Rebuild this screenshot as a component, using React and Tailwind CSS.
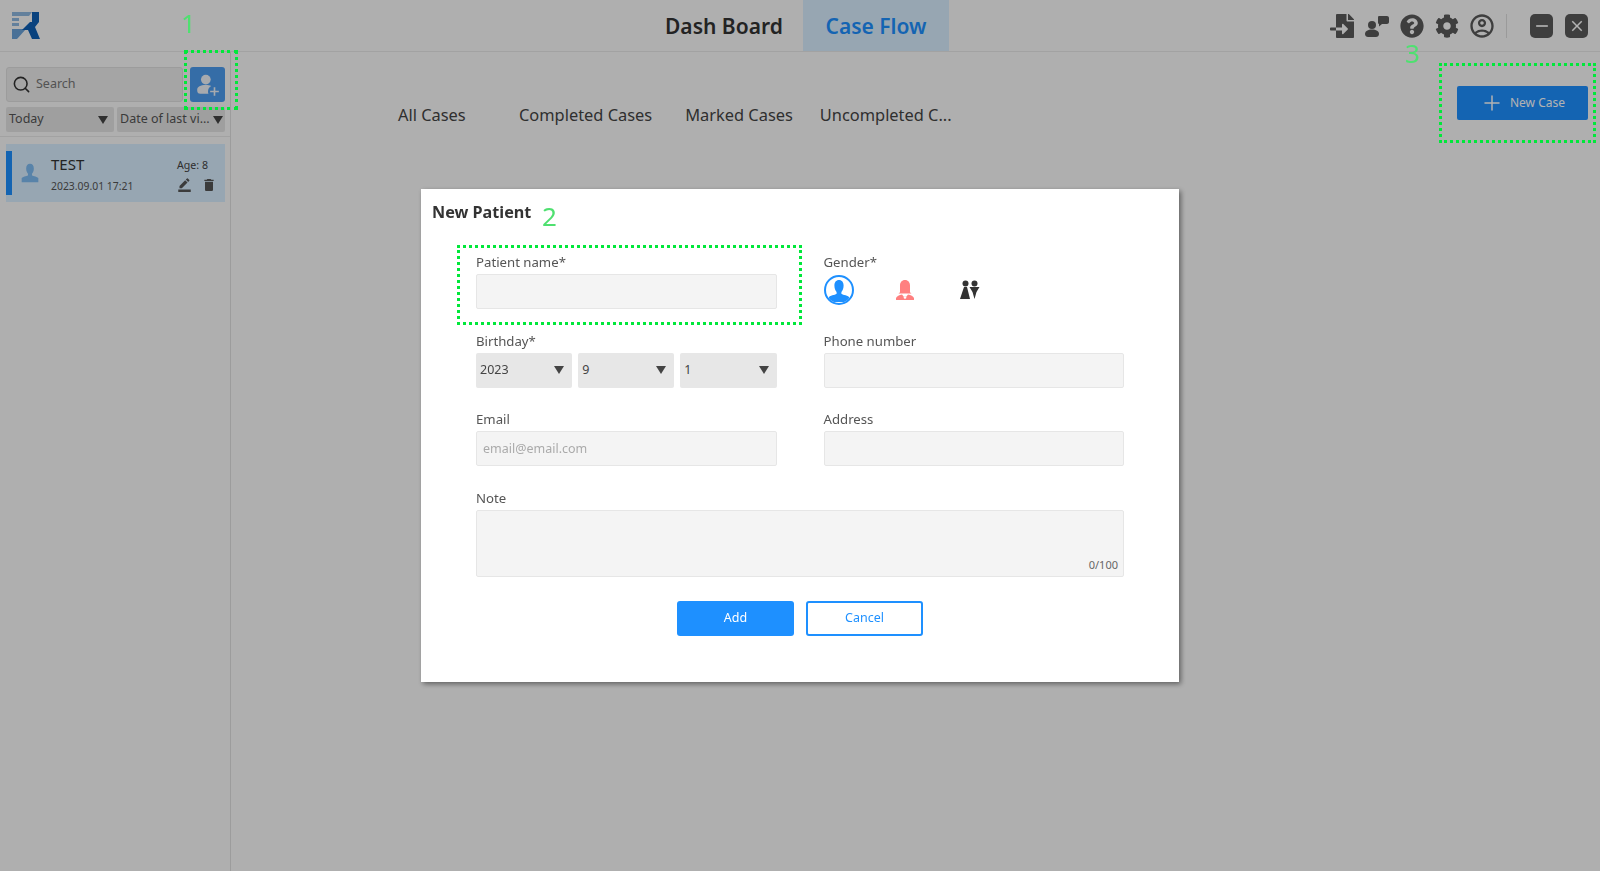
import React from 'react';
import { Search, Plus } from 'lucide-react';
import { FaFileImport, FaQuestionCircle, FaCog } from 'react-icons/fa';
import { MdBorderColor, MdDelete, MdOutlineAccountCircle, MdRemove, MdClose } from 'react-icons/md';

const font = { fontFamily: '"Noto Sans", "Open Sans", sans-serif' };

function Caret({ className = '' }) {
  return (
    <svg viewBox="0 0 10 8" className={`w-[10px] h-[8px] shrink-0 ${className}`}>
      <path d="M0 0h10L5 8z" fill="#444" />
    </svg>
  );
}

function Logo() {
  return (
    <svg viewBox="0 0 30 30" className="w-[30px] h-[30px]">
      <path d="M1 1h20l-3 4H1z" fill="#8fb8e0" />
      <path d="M1 7h7v3H1zM1 12h7v3H1z" fill="#8fb8e0" />
      <path d="M1 18h14l-9 10H1z" fill="#6aa2d8" />
      <path d="M21 1h7v10l-4 5 5 12h-8l-4-9h-6l8-8h2z" fill="#0d5fb5" />
    </svg>
  );
}

function PatientIcon({ className, color }) {
  return (
    <svg viewBox="0 0 24 24" className={className}>
      <path d="M12 1c3 0 4.600 2.400 4.600 5.600 0 2.800-.9 5-2.200 6.400v1.800c0 .8 5.400 1.400 7.600 3.200V23H2v-5c2.200-1.800 7.600-2.400 7.600-3.200V13C8.300 11.600 7.400 9.400 7.400 6.600 7.400 3.400 9 1 12 1z" fill={color} />
    </svg>
  );
}

function FemaleIcon() {
  return (
    <svg viewBox="0 0 20 20" className="w-[20px] h-[20px]">
      <path d="M10 0c3.200 0 5 2.400 5 5.500v6c0 1 .6 1.500 1.500 2H3.500c.9-.5 1.500-1 1.500-2v-6C5 2.400 6.800 0 10 0z" fill="#ff8080" />
      <path d="M7 14.500 9 17l1-1 1 1 2-2.500c3 .5 5 1.800 6 3.500v2H1v-2c1-1.700 3-3 6-3.500z" fill="#ff8080" />
      <circle cx="10" cy="17.500" r="1.300" fill="#fff" />
    </svg>
  );
}

function AddUserIcon() {
  return (
    <svg viewBox="0 0 24 24" className="w-[26px] h-[26px]">
      <circle cx="10" cy="7" r="4.500" fill="#f0f4f9" />
      <path d="M2 16.500c0-3 3-4.500 8-4.500 2 0 3.500.3 5 1-2 1-3 2.700-3 5 0 .8.100 1.400.4 2H5c-2 0-3-1-3-3.500z" fill="#f0f4f9" />
      <path d="M18 14v8M14 18h8" stroke="#f0f4f9" strokeWidth="1.500" />
    </svg>
  );
}

function ChatUserIcon() {
  return (
    <svg viewBox="0 0 24 24" className="w-[24px] h-[24px]">
      <circle cx="7" cy="11" r="4" fill="#5a5a5a" />
      <path d="M0 20c0-3 3-4.500 7-4.500s7 1.500 7 4.500c0 2-1.500 3-3 3H3c-1.500 0-3-1-3-3z" fill="#5a5a5a" />
      <path d="M14 2h8c1 0 2 .8 2 2v4c0 1-1 2-2 2h-5l-3 2.500V10c-1-.3-1-1-1-2V4c0-1.200 0-2 1-2z" fill="#5a5a5a" />
    </svg>
  );
}

function CouplesIcon() {
  return (
    <svg viewBox="0 0 20 20" className="w-[20px] h-[20px]">
      <circle cx="5.500" cy="3.500" r="3" fill="#333" />
      <path d="M4 7h3l3 12H0z" fill="#333" />
      <circle cx="14.500" cy="3.500" r="3" fill="#333" />
      <path d="M9.500 7h10l-3 5-2 7-2-7z" fill="#333" />
    </svg>
  );
}

function FieldLabel({ children }) {
  return <div className="h-[23px] text-[13.2px] leading-[22px] text-[#555]">{children}</div>;
}

function TextField({ label, placeholder }) {
  return (
    <div>
      <FieldLabel>{label}</FieldLabel>
      <input
        placeholder={placeholder}
        className="block w-full h-[35px] px-[6px] text-[12.5px] text-[#555] bg-[#f4f4f4] border border-[#e6e6e6] rounded-[2px] placeholder:text-[#aaa] outline-none"
      />
    </div>
  );
}

function DateSelect({ value }) {
  return (
    <div className="flex-1 h-[35px] flex items-center justify-between px-[4px] pr-[8px] bg-[#e7e7e7] rounded-[2px] text-[12.5px] text-[#444]">
      <span>{value}</span>
      <Caret />
    </div>
  );
}

function FilterSelect({ value, className }) {
  return (
    <div className={`h-[25px] flex items-center justify-between pl-[3px] bg-[#e4e4e4] rounded-[2px] text-[12.5px] text-[#555] ${className}`}>
      <span className="whitespace-nowrap">{value}</span>
      <Caret />
    </div>
  );
}

function NewPatientModal() {
  return (
    <div className="fixed inset-0 z-10 bg-black/30 flex items-center justify-center">
      <div className="relative w-[758px] h-[493px] bg-white shadow-[2px_2px_5px_rgba(0,0,0,0.45)]">
        <h2 className="pl-[11px] pt-[10px] h-[62px] text-[16.2px] leading-[26px] font-bold text-[#333]">New Patient</h2>
        <div className="px-[55px] grid grid-cols-2 gap-x-[47px] gap-y-[20.7px]">
          <TextField label="Patient name*" />
          <div>
            <FieldLabel>Gender*</FieldLabel>
            <div className="flex items-center h-[31px]">
              <div className="w-[30px] h-[30px] rounded-full border-2 border-[#1e90ff] overflow-hidden flex items-end justify-center">
                <PatientIcon className="w-[24px] h-[24px]" color="#1e90ff" />
              </div>
              <div className="ml-[36px] w-[30px] flex justify-center">
                <FemaleIcon />
              </div>
              <div className="ml-[35px] w-[30px] flex justify-center">
                <CouplesIcon />
              </div>
            </div>
          </div>
          <div>
            <FieldLabel>Birthday*</FieldLabel>
            <div className="flex gap-[6px]">
              <DateSelect value="2023" />
              <DateSelect value="9" />
              <DateSelect value="1" />
            </div>
          </div>
          <TextField label="Phone number" />
          <TextField label="Email" placeholder="email@email.com" />
          <TextField label="Address" />
          <div className="col-span-2">
            <FieldLabel>Note</FieldLabel>
            <div className="relative h-[67px] bg-[#f4f4f4] border border-[#e6e6e6] rounded-[2px]">
              <span className="absolute right-[5px] bottom-[3px] text-[11px] text-[#666]">0/100</span>
            </div>
          </div>
        </div>
        <div className="mt-[24px] flex justify-center gap-[12px]">
          <button className="w-[117px] h-[35px] bg-[#1e90ff] text-white text-[12.5px] rounded-[3px]">Add</button>
          <button className="w-[117px] h-[35px] bg-white border-2 border-[#1e90ff] text-[#1e90ff] text-[12.5px] rounded-[3px]">Cancel</button>
        </div>
        {/* annotation 2 */}
        <div className="absolute left-[36px] top-[56px] w-[345px] h-[80px] border-[3px] border-dotted border-[#00e83a]" />
        <span className="absolute left-[121px] top-[12px] text-[26px] leading-[30px] text-[#4fe070]">2</span>
      </div>
    </div>
  );
}

export default function App() {
  return (
    <div style={font} className="relative h-[871px] w-[1600px] overflow-hidden flex flex-col bg-[#fbfbfb] text-[#333]">
      <header className="relative h-[52px] shrink-0 flex items-center border-b border-[#e8e8e8]">
        <div className="pl-[11px] w-[660px]"><Logo /></div>
        <div className="absolute left-[665px] top-0 flex h-[51px]">
          <div className="w-[138px] pt-[2px] flex items-center text-[21px] font-semibold text-[#333]">Dash Board</div>
          <div className="w-[146px] pt-[2px] flex items-center justify-center text-[21px] font-semibold text-[#1e90ff] bg-[#d9eeff]">Case Flow</div>
        </div>
        <div className="ml-auto pr-[12px] flex items-center text-[#5a5a5a]">
          <div className="flex items-center gap-[11px]">
            <FaFileImport className="w-[24px] h-[24px]" />
            <ChatUserIcon />
            <FaQuestionCircle className="w-[24px] h-[24px]" />
            <FaCog className="w-[24px] h-[24px]" />
            <MdOutlineAccountCircle className="w-[28px] h-[28px] -mx-[2px]" />
          </div>
          <div className="w-px h-[24px] bg-[#ddd] ml-[12px] mr-[23px]" />
          <div className="flex gap-[12px]">
            <div className="w-[23px] h-[24px] rounded-[5px] bg-[#5a5a5a] flex items-center justify-center"><MdRemove className="w-[20px] h-[20px] text-white" /></div>
            <div className="w-[23px] h-[24px] rounded-[5px] bg-[#5a5a5a] flex items-center justify-center"><MdClose className="w-[18px] h-[18px] text-white" /></div>
          </div>
        </div>
      </header>

      <div className="flex flex-1 min-h-0">
        <aside className="w-[231px] shrink-0 border-r border-[#e0e0e0]">
          <div className="pt-[15px] pl-[6px] pr-[5px] pb-[4px] border-b border-[#e8e8e8]">
            <div className="flex gap-[7px]">
              <div className="w-[177px] h-[35px] flex items-center gap-[5px] px-[5px] bg-[#ececec] border border-[#e0e0e0] rounded-[3px] text-[12.5px] text-[#777]">
                <Search className="w-[19px] h-[19px] text-[#333]" strokeWidth={2} />
                <span>Search</span>
              </div>
              <div className="w-[35px] h-[35px] rounded-[3px] bg-[#4d9df0] flex items-center justify-center"><AddUserIcon /></div>
            </div>
            <div className="flex gap-[3px] mt-[5px]">
              <FilterSelect value="Today" className="w-[108px] pr-[6px]" />
              <FilterSelect value="Date of last vi..." className="w-[108px] pr-[2px]" />
            </div>
          </div>
          <div className="pl-[6px] pr-[5px] pt-[7px]">
            <div className="relative h-[58px] flex items-center bg-[#d9eeff]">
              <div className="absolute left-0 top-[7px] w-[6px] h-[44px] bg-[#1e90ff]" />
              <PatientIcon className="w-[20px] h-[24px] ml-[14px]" color="#7fbcf2" />
              <div className="ml-[11px]">
                <div className="text-[15px] leading-[22px] text-[#333]">TEST</div>
                <div className="text-[10.4px] leading-[16px] mt-[3px] text-[#555]">2023.09.01 17:21</div>
              </div>
              <div className="ml-auto pr-[8px] flex flex-col items-end">
                <div className="pr-[9px] text-[10.6px] leading-[16px] mt-[3px] text-[#444]">Age: 8</div>
                <div className="flex gap-[9px] mt-[4px] text-[#555]">
                  <MdBorderColor className="w-[15px] h-[15px]" />
                  <MdDelete className="w-[16px] h-[16px]" />
                </div>
              </div>
            </div>
          </div>
        </aside>

        <main className="flex-1 flex items-start">
          <nav className="ml-[167px] mt-[50px] flex text-[16.4px] leading-[26px] text-[#444] gap-[33px]">
            <span className="w-[88px]">All Cases</span>
            <span>Completed Cases</span>
            <span>Marked Cases</span>
            <span className="-ml-[6px]">Uncompleted C...</span>
          </nav>
          <button className="ml-auto mr-[12px] mt-[34px] w-[131px] h-[34px] flex items-center justify-center gap-[6px] bg-[#1e90ff] rounded-[2px] text-white text-[12px]">
            <Plus className="w-[24px] h-[24px]" strokeWidth={1.5} />
            New Case
          </button>
        </main>
      </div>

      <NewPatientModal />

      {/* annotations 1 and 3 sit above the overlay */}
      <div className="absolute z-20 left-[184px] top-[50px] w-[54px] h-[60px] border-[3px] border-dotted border-[#00e83a]" />
      <span className="absolute z-20 left-[181px] top-[8px] text-[26px] leading-[30px] text-[#4fe070]">1</span>
      <div className="absolute z-20 left-[1439px] top-[63px] w-[157px] h-[80px] border-[3px] border-dotted border-[#00e83a]" />
      <span className="absolute z-20 left-[1405px] top-[38px] text-[26px] leading-[30px] text-[#4fe070]">3</span>
    </div>
  );
}
